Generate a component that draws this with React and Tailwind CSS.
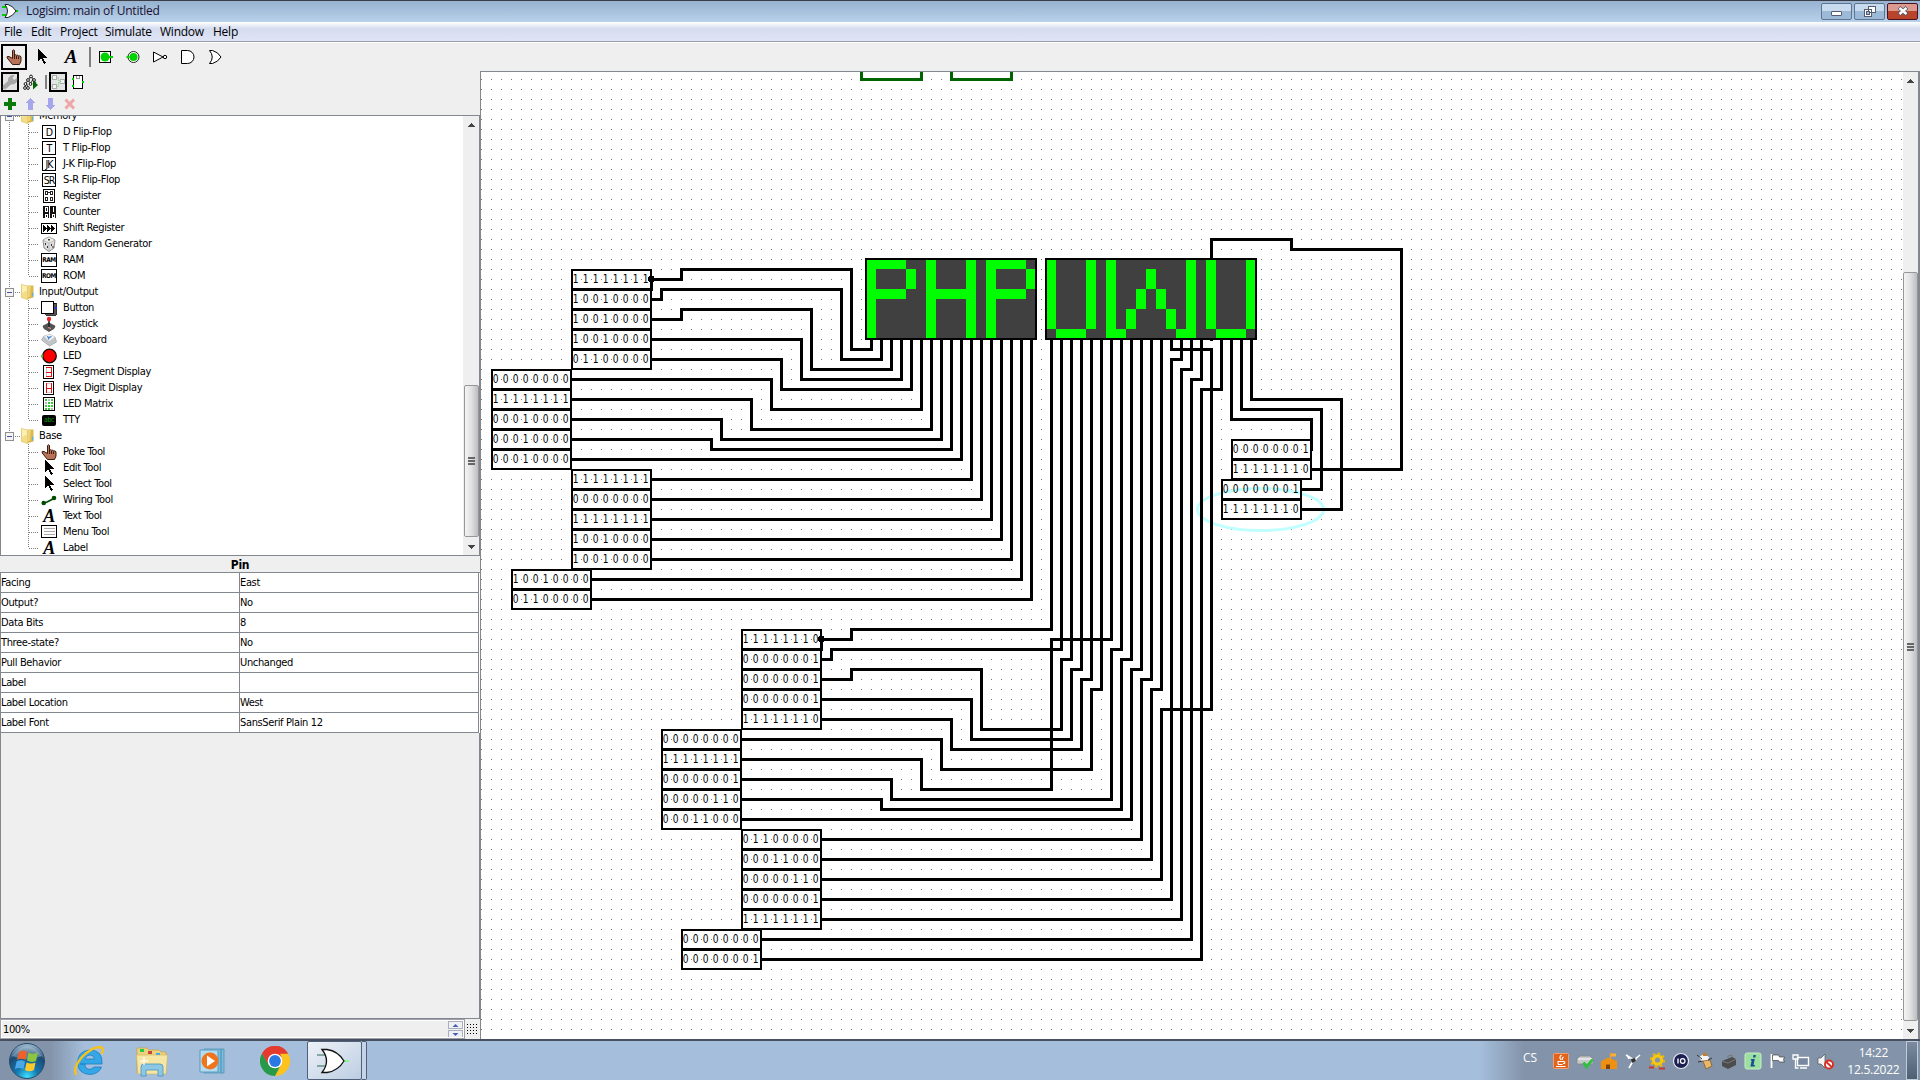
import React from "react";

const UI = "font-['DejaVu_Sans_Condensed','DejaVu_Sans',sans-serif] [font-stretch:condensed] text-[11px] tracking-[-0.36px]";
const SEGOE = "font-['Open_Sans','Noto_Sans',sans-serif]";

/* ---------- circuit data ---------- */
const PHP = [
  "11111111", "10010000", "10010000", "10010000", "01100000",
  "00000000", "11111111", "00010000", "00010000", "00010000",
  "11111111", "00000000", "11111111", "10010000", "10010000",
  "10010000", "01100000",
];
const UWU = [
  "11111110", "00000001", "00000001", "00000001", "11111110",
  "00000000", "11111111", "00000001", "00000110", "00011000",
  "01100000", "00011000", "00000110", "00000001", "11111111",
  "00000000", "11111110", "00000001", "00000001", "00000001", "11111110",
];

const stack = (x, y, values) => values.map((bits, i) => ({ x, y: y + i * 20, bits }));
const PINS = [
  ...stack(571, 279, PHP.slice(0, 5)),
  ...stack(491, 379, PHP.slice(5, 10)),
  ...stack(571, 479, PHP.slice(10, 15)),
  ...stack(511, 579, PHP.slice(15, 17)),
  ...stack(741, 639, UWU.slice(0, 5)),
  ...stack(661, 739, ["00000000", "11111111", "00000001", "00000110", "00011000"]),
  ...stack(741, 839, ["01100000", "00011000", "00000110", "00000001", "11111111"]),
  ...stack(681, 939, ["00000000", "00000001"]),
  ...stack(1231, 449, ["00000001", "11111110"]),
  ...stack(1221, 489, ["00000001", "11111110"]),
];

const WIRES = [
  "M651 279H681V269H851V349H871V339",
  "M651 279V289",
  "M651 299H661V289H841V359H881V339",
  "M651 319H681V309H811V369H891V339",
  "M651 339H801V379H901V339",
  "M651 359H781V389H911V339",
  "M571 379H771V409H921V339",
  "M571 399H751V429H931V339",
  "M571 419H721V439H941V339",
  "M571 439H711V449H951V339",
  "M571 459H961V339",
  "M651 479H971V339",
  "M651 499H981V339",
  "M651 519H991V339",
  "M651 539H1001V339",
  "M651 559H1011V339",
  "M591 579H1021V339",
  "M591 599H1031V339",
  "M821 639H851V629H1051V339",
  "M821 639V649",
  "M821 659H831V649H1061V339",
  "M821 679H851V669H981V729H1061V659H1071V339",
  "M821 699H971V739H1071V669H1081V339",
  "M821 719H951V749H1081V679H1091V339",
  "M741 739H941V769H1091V689H1101V339",
  "M741 759H921V789H1051V639H1111V339",
  "M741 779H891V799H1111V649H1121V339",
  "M741 799H881V809H1121V659H1131V339",
  "M741 819H1131V669H1141V339",
  "M821 839H1141V679H1151V339",
  "M821 859H1151V689H1161V339",
  "M821 879H1161V709H1211V349H1171V339",
  "M821 899H1171V359H1181V339",
  "M821 919H1181V369H1191V339",
  "M761 939H1191V379H1201V339",
  "M761 959H1201V389H1221V339",
  "M1211 339V239H1291V249H1401V469H1311",
  "M1231 339V419H1311V449",
  "M1241 339V409H1321V489H1301",
  "M1251 339V399H1341V509H1301",
];

function Matrix({ x, y, cols }) {
  const w = cols.length * 10;
  return (
    <g>
      <rect x={x} y={y} width={w} height="80" fill="#404040" />
      {cols.map((c, i) =>
        c.split("").map((b, j) =>
          b === "1" ? <rect key={i + "-" + j} x={x + i * 10} y={y + j * 10} width="10" height="10" fill="#00ff00" /> : null
        )
      )}
      <rect x={x} y={y} width={w} height="80" fill="none" stroke="#000" strokeWidth="2" />
    </g>
  );
}

function Circuit() {
  return (
    <svg width="1422" height="967" viewBox="481 72 1422 967" className="block shrink-0 bg-white" shapeRendering="crispEdges">
      <defs>
        <pattern id="grid" width="10" height="10" patternUnits="userSpaceOnUse">
          <rect x="1" y="9" width="1" height="1" fill="#777" />
        </pattern>
      </defs>
      <rect x="481" y="72" width="1422" height="967" fill="url(#grid)" />
      <g fill="#fff" stroke="#006400" strokeWidth="3">
        <rect x="861.5" y="60" width="60" height="19.5" />
        <rect x="951.5" y="60" width="60" height="19.5" />
      </g>
      <ellipse cx="1260.5" cy="509.5" rx="63" ry="21" fill="none" stroke="#c0ffff" strokeWidth="3" shapeRendering="auto" />
      <g fill="none" stroke="#000" strokeWidth="3" strokeLinecap="square" transform="translate(.5 .5)">
        {WIRES.map((d) => <path key={d} d={d} />)}
      </g>
      <path d="M649 276h4l1 1v4l-1 1h-4l-1-1v-4zM819 636h4l1 1v4l-1 1h-4l-1-1v-4z" />
      {PINS.map((p) => (
        <g key={p.x + "-" + p.y}>
          <rect x={p.x + 1} y={p.y - 9} width="79" height="19" fill="none" stroke="#000" strokeWidth="2" />
          {p.bits.split("").map((b, i) => (
            <text
              key={i}
              transform={`translate(${p.x + 4.6 + i * 10} ${p.y + 4}) scale(.88 1)`}
              textAnchor="middle"
              className="font-['DejaVu_Sans_Condensed','DejaVu_Sans',sans-serif] text-[11.5px] [font-stretch:condensed]"
            >{b}</text>
          ))}
        </g>
      ))}
      <Matrix x={866} y={259} cols={PHP} />
      <Matrix x={1046} y={259} cols={UWU} />
    </svg>
  );
}

/* ---------- icons ---------- */
const Ico = ({ w = 16, h = 16, smooth, children }) => (
  <svg width={w} height={h} viewBox={`0 0 ${w} ${h}`} className="block shrink-0 overflow-visible" fill="none" shapeRendering={smooth ? "auto" : "crispEdges"}>
    {children}
  </svg>
);

const Hand = () => (
  <Ico smooth>
    <path d="M6.500 9.500V1.500q1-1.500 2 0V6q1-.8 2 .3q1-.6 2 .5q1.500-.3 2.500 1v4.200L13.500 15.500H6.500L1.200 9V7.500H3z" fill="#b87358" stroke="#3a1c10" strokeWidth="1" />
    <path d="M8.500 6v4M10.500 7V10M12.500 7.500v2.500" stroke="#3a1c10" />
  </Ico>
);
const Arrow = () => <Ico><path d="M4 0v12l3-3 3 6 2-1-3-5h4.500z" fill="#000" /></Ico>;
const LetterA = ({ big }) => (
  <span className={"block w-4 text-center font-['Liberation_Serif',serif] font-bold italic leading-4 " + (big ? "translate-x-[1px] text-[19px]" : "text-[18px]")}>A</span>
);
const PinIn = () => <Ico><path d="M2.500 2.500h11v11h-11z" stroke="#000" fill="#fff" /><circle cx="8" cy="8" r="4.500" fill="#00d200" shapeRendering="auto" /><path d="M12 7h4v2h-4z" fill="#00d200" /></Ico>;
const PinOut = () => <Ico smooth><circle cx="8.500" cy="8" r="5.500" stroke="#222" fill="#fff" /><circle cx="8.500" cy="8" r="4" fill="#00d200" /><path d="M1.500 7h3v2h-3z" fill="#00d200" /></Ico>;
const NotGate = () => <Ico smooth><path d="M1.500 3v10L11 8z" stroke="#000" fill="#fff" /><circle cx="13" cy="8" r="1.700" stroke="#000" fill="#fff" /></Ico>;
const AndGate = () => <Ico smooth><path d="M1.500 1.500h6a6.500 6.500 0 0 1 0 13h-6z" stroke="#000" fill="#fff" /></Ico>;
const OrGate = () => <Ico smooth><path d="M2.500 1.500h3Q11 3 14 8Q11 13 5.500 14.500h-3Q8 8 2.500 1.500z" stroke="#000" fill="#fff" /></Ico>;
const Wrench = () => <Ico smooth><path d="M1.500 14.500l-.5-2.500L6.500 7Q6 2.500 10 1.500h2L10 4l2 2.500 3-2Q15.500 9 11 10H9L3.500 14.800z" fill="#a8a8a8" stroke="#999" strokeWidth=".6" /></Ico>;
const SimTree = () => (
  <Ico smooth>
    <path d="M8 2L3 9M8 2l5 7M5 6l3 4M3 9l-1 4M3 9l2 4M10 5l-2 4" stroke="#000" strokeWidth=".8" />
    {[[8, 2.500], [5, 6], [11, 6], [2.500, 10], [7.500, 10], [2, 14], [5, 14]].map(([x, y]) => <circle key={x + "," + y} cx={x} cy={y} r="1.400" fill="#fff" stroke="#000" strokeWidth=".9" />)}
    <path d="M10 6.500v9l5-4.500z" fill="#006400" />
  </Ico>
);
const Circ = () => <Ico><path d="M2.500 1.500h4v4h-4zM2.500 10.500h4v4h-4zM10.500 5.500h4v4h-4z" stroke="#aaa" fill="#f4f4f4" /><path d="M1 3.500h1M1 12.500h1M7 3.500h1.500v3h2M7 12.500h1.500v-4h2" stroke="#a6dba6" /></Ico>;
const Chip = () => <Ico><path d="M3.500 1.500h9v13h-9z" stroke="#000" fill="#fff" /><path d="M6.500 2v2h3v-2" stroke="#999" /><path d="M2 4h2v2H2zM2 11h2v2H2zM12 7h2v2h-2z" fill="#00d200" /></Ico>;
const Plus = () => <Ico><path d="M6 2h4v4h4v4h-4v4H6v-4H2V6h4z" fill="#0a780a" /></Ico>;
const Up = () => <Ico><path d="M8 2l5 5h-2.500v7h-5V7H3z" fill="#a6a6ec" /></Ico>;
const Down = () => <Ico><path d="M8 14l5-5h-2.500V2h-5v7H3z" fill="#a6a6ec" /></Ico>;
const Cross = () => <Ico smooth><path d="M3.500 3.500l8.500 9M12 3.500l-8.500 9" stroke="#eea6a6" strokeWidth="3" /></Ico>;

const Boxed = ({ t }) => (
  <span className="flex h-[14px] w-[14px] shrink-0 items-center justify-center border border-black bg-white font-['DejaVu_Sans_Condensed','DejaVu_Sans',sans-serif] text-[10.5px] leading-none tracking-[-1px]">{t}</span>
);
const Reg = () => <Ico><path d="M2.500 1.500h11v13h-11z" stroke="#000" fill="#fff" /><path d="M4.500 3.500h2v3h-2zM9.500 3.500h2v3h-2zM4.500 9.500h2v3h-2zM9.500 9.500h2v3h-2zM7 4h2" stroke="#222" /></Ico>;
const Cnt = () => <Ico><path d="M2 2h6v12H2zM9 2h6v12H9z" fill="#111" /><path d="M4 3.500h2v4H4zM12 3v5M4 10.500h2v3H4zM11 10.500h2v3h-2z" stroke="#fff" /></Ico>;
const Shift = () => <Ico><path d="M.5 3.500h15v10H.5z" stroke="#000" fill="#fff" /><path d="M2 5l4 3.500L2 12zM6 5l4 3.500L6 12zM10 5l4 3.500L10 12z" fill="#000" /></Ico>;
const Dice = () => <Ico smooth><path d="M8 1l6 3-1 8-5 3.500L3 12 2 4z" fill="#ddd" stroke="#777" strokeWidth=".8" /><path d="M2 4l6 3 6-3L8 1zM8 7v8.500" stroke="#aaa" strokeWidth=".7" fill="#f0f0ec" /><path d="M7 3h2v1.500H7zM4 7h1v2H4zM6 10h1v2H6zM10 8h1v2h-1zM11.500 10h1v2h-1z" fill="#333" /></Ico>;
const Mem = ({ t }) => (
  <span className="flex h-[14px] w-4 items-center justify-center border border-black bg-white font-['DejaVu_Sans_Condensed','DejaVu_Sans',sans-serif] text-[6.500px] font-bold leading-none tracking-[-0.5px]">{t}</span>
);
const Btn = () => <Ico><path d="M3 3h12v12H5l-2-2z" fill="#555" stroke="#000" strokeWidth=".8" /><path d="M.5 1.500h12v12H.5z" fill="#fff" stroke="#000" /><path d="M14 7h2v2h-2z" fill="#22f" /></Ico>;
const Joy = () => <Ico smooth><path d="M2 10l6-3 6 3-1 2.500L8 15.500 3 12.500z" fill="#555" stroke="#333" strokeWidth=".7" /><path d="M8 4v7" stroke="#222" strokeWidth="1.600" /><circle cx="8" cy="3" r="2.200" fill="#e22" /><path d="M7 11.500l3 1" stroke="#e99" /></Ico>;
const Key = () => <Ico smooth><path d="M.5 8L3 4l6-1.500L14 5l1.500 5-7 4z" fill="#c2c5c8" stroke="#9a9da0" strokeWidth=".7" /><path d="M3 4l6-1.500L14 5 8 9z" fill="#f1f4f7" /><path d="M6 4.500l2 1 2.500-1M8 5.500l-.5 2" stroke="#37c" strokeWidth="1.200" /></Ico>;
const Led = () => <Ico smooth><circle cx="8.500" cy="8" r="6.800" fill="#f00" stroke="#111" strokeWidth="1.300" /><path d="M0 7h2v2.500H0z" fill="#3c3" /></Ico>;
const Seg = ({ hex }) => <Ico><path d="M2.500 1.500h10v13h-10z" stroke="#000" fill="#fff" /><path d="M5.500 3.500v9h5v-9z" stroke="#ccc" /><path d={hex ? "M5.500 3v10M10.500 3v10M5 8.500h5" : "M5 3.500h5.500v9H5M5 8.500h5"} stroke="#e01010" /></Ico>;
const MatrixIcon = () => (
  <Ico>
    <path d="M2.500 1.500h11v13h-11z" stroke="#000" fill="#fff" />
    {[3, 6, 9, 12].map((y, j) => [4, 7, 10].map((x, i) => <rect key={x + "-" + y} x={x} y={y} width="2" height="2" fill={(i + j) % 4 === 1 ? "#bbb" : "#3c3"} />))}
  </Ico>
);
const Tty = () => <span className="flex h-[11px] w-[14px] items-center justify-center rounded-[2px] bg-black font-['DejaVu_Sans_Condensed','DejaVu_Sans',sans-serif] text-[7px] leading-none tracking-[-0.4px] text-[#0a9a0a]">abc</span>;
const WireIcon = () => <Ico smooth><path d="M2 11.500L6 10l3-1.500L14 6" stroke="#004d00" strokeWidth="1.800" /><circle cx="2.700" cy="11" r="2.300" fill="#004d00" /><circle cx="13" cy="6" r="2.300" fill="#004d00" /></Ico>;
const MenuIcon = () => <Ico><path d="M.5 1.500h15v12H.5z" fill="#fff" stroke="#000" /><path d="M2.500 4.500h11M2.500 7.500h11M2.500 10.500h11" stroke="#aaa" /></Ico>;
const Folder = () => (
  <svg width="14" height="16" viewBox="0 0 14 16" className="block shrink-0">
    <path d="M7 1.500h5.500v12L7 15z" fill="#dcb84c" /><path d="M.5.500L6.500 2v13.500L.5 13.500z" fill="#f3dd86" stroke="#d9b94f" strokeWidth=".6" /><path d="M1 1l5 1.500v4L1 9z" fill="#faf0b4" /><path d="M7 2h3l-1 11H7z" fill="#eed478" /><path d="M11 8.500h1.300v4H11z" fill="#5ab4e8" />
  </svg>
);

/* ---------- explorer tree ---------- */
const TREE = [
  ["Memory", null],
  ["D Flip-Flop", <Boxed t="D" />], ["T Flip-Flop", <Boxed t="T" />], ["J-K Flip-Flop", <Boxed t="JK" />], ["S-R Flip-Flop", <Boxed t="SR" />],
  ["Register", <Reg />], ["Counter", <Cnt />], ["Shift Register", <Shift />], ["Random Generator", <Dice />],
  ["RAM", <Mem t="RAM" />], ["ROM", <Mem t="ROM" />],
  ["Input/Output", null],
  ["Button", <Btn />], ["Joystick", <Joy />], ["Keyboard", <Key />], ["LED", <Led />],
  ["7-Segment Display", <Seg />], ["Hex Digit Display", <Seg hex />], ["LED Matrix", <MatrixIcon />], ["TTY", <Tty />],
  ["Base", null],
  ["Poke Tool", <Hand />], ["Edit Tool", <Arrow />], ["Select Tool", <Arrow />], ["Wiring Tool", <WireIcon />],
  ["Text Tool", <LetterA />], ["Menu Tool", <MenuIcon />], ["Label", <LetterA />],
];

function Lines({ group, last, trunk }) {
  const c = { stroke: "#808080", strokeDasharray: "1 1" };
  return group ? (
    <svg width="20" height="16" className="block shrink-0" shapeRendering="crispEdges">
      <path d={trunk ? "M8.500 0V16" : "M8.500 0V8"} {...c} />
      <path d="M14 8.500H20" {...c} />
      <rect x="4.500" y="4.500" width="8" height="8" rx="1" fill="#f4f4f4" stroke="#8f8f8f" />
      <path d="M6 8.500h5" stroke="#3a58a8" />
    </svg>
  ) : (
    <svg width="40" height="16" className="block shrink-0" shapeRendering="crispEdges">
      {trunk && <path d="M8.500 0V16" {...c} />}
      <path d={last ? "M27.500 0V8" : "M27.500 0V16"} {...c} />
      <path d="M28 8.500H38" {...c} />
    </svg>
  );
}

function Tree() {
  return (
    <div className={"-mt-[8px] flex flex-col " + UI}>
      {TREE.map(([label, icon], i) => {
        const group = !icon;
        const last = !TREE[i + 1] || !TREE[i + 1][1];
        return (
          <div key={label} className="flex h-4 shrink-0 items-center whitespace-nowrap leading-4">
            <Lines group={group} last={last} trunk={i < 20} />
            {group ? <Folder /> : <span className="flex w-4 shrink-0 items-center justify-center">{icon}</span>}
            <span className={group ? "ml-[4px]" : "ml-[6px]"}>{label}</span>
          </div>
        );
      })}
    </div>
  );
}

const Tri = ({ up }) => (
  <svg width="15" height="17" className="block shrink-0" shapeRendering="crispEdges">
    <path d={up ? "M4 11h7L7.500 7z" : "M4 8h7L7.500 12z"} fill="#444" />
  </svg>
);
const Thumb = ({ size }) => (
  <div className={"flex shrink-0 items-center justify-center rounded-[2px] border border-[#979797] bg-gradient-to-r from-[#f4f4f4] via-[#e0e0e2] to-[#bdbdc1] " + size}>
    <div className="flex flex-col gap-[1px]">
      <div className="h-[2px] w-[7px] bg-[#666]" /><div className="h-[2px] w-[7px] bg-[#666]" /><div className="h-[2px] w-[7px] bg-[#666]" />
    </div>
  </div>
);

const ATTRS = [
  ["Facing", "East"], ["Output?", "No"], ["Data Bits", "8"], ["Three-state?", "No"],
  ["Pull Behavior", "Unchanged"], ["Label", ""], ["Label Location", "West"], ["Label Font", "SansSerif Plain 12"],
];

function LeftPanel() {
  return (
    <div className="flex w-[480px] shrink-0 flex-col bg-[#efefef]">
      <div className="flex h-[22px] shrink-0 items-center pl-[1px]">
        <div className="flex h-[20px] w-[18px] items-center justify-center border-2 border-black bg-[#e4e4e4]"><Wrench /></div>
        <div className="ml-[4px]"><SimTree /></div>
        <div className="ml-[6px] h-[14px] w-[2px] bg-[#808080]" />
        <div className="ml-[2px] flex h-[20px] w-[18px] items-center justify-center border-2 border-black bg-[#e4e4e4]"><Circ /></div>
        <div className="ml-[3px]"><Chip /></div>
      </div>
      <div className="flex h-[22px] shrink-0 items-center gap-1 pl-[2px]"><Plus /><Up /><Down /><Cross /></div>
      <div className="flex h-[441px] shrink-0 overflow-hidden border border-[#828790] bg-white">
        <div className="min-w-0 flex-1 overflow-hidden"><Tree /></div>
        <div className="flex w-[16px] flex-col items-center bg-[#efefef]">
          <Tri up /><div className="h-[252px] shrink-0" /><Thumb size="h-[152px] w-[15px]" /><Tri />
        </div>
      </div>
      <div className="flex h-[16px] shrink-0 items-center justify-center pt-[2px] font-['DejaVu_Sans_Condensed','DejaVu_Sans',sans-serif] text-[12px] font-bold leading-none tracking-[-0.3px]">Pin</div>
      <div className={"grid shrink-0 grid-cols-[239px_239px] border-l border-t border-[#828790] bg-white " + UI}>
        {ATTRS.map(([k, v]) => (
          <React.Fragment key={k}>
            <div className="h-[20px] border-b border-r border-[#828790] leading-[19px]">{k}</div>
            <div className="h-[20px] border-b border-r border-[#828790] leading-[19px]">{v}</div>
          </React.Fragment>
        ))}
      </div>
      <div className="flex-1 border-b border-l border-r border-[#828790]" />
      <div className="flex h-[20px] shrink-0">
        <div className="flex w-[465px] items-center border border-[#a0a0a8] bg-[#efefef] outline outline-1 -outline-offset-2 outline-white">
          <span className={"ml-[2px] flex-1 pt-[2px] " + UI}>100%</span>
          <span className="mr-[1px] flex flex-col gap-[1px]">
            <svg width="15" height="8" className="block border border-[#a8b0c0] bg-[#f0f0f4]"><path d="M3.500 5h6l-3-3z" fill="#4460b0" /></svg>
            <svg width="15" height="8" className="block border border-[#a8b0c0] bg-[#f0f0f4]"><path d="M3.500 2h6l-3 3z" fill="#4460b0" /></svg>
          </span>
        </div>
        <svg width="14" height="19" className="block" shapeRendering="crispEdges">
          {[0, 1, 2, 3].map((r) => [0, 1, 2, 3].map((c) => <rect key={r + "-" + c} x={2 + c * 3} y={5 + r * 3} width="1" height="1" fill="#000" />))}
        </svg>
      </div>
    </div>
  );
}

/* ---------- window frame ---------- */
const ToolSlot = ({ on, children }) => (
  <div className={"flex h-[26px] w-[26px] shrink-0 items-center justify-center " + (on ? "border-2 border-black" : "")}>{children}</div>
);

const MENU = [["File", "w-[27px]"], ["Edit", "w-[29px]"], ["Project", "w-[45px]"], ["Simulate", "w-[55px]"], ["Window", "w-[53px]"], ["Help", "w-[40px]"]];

function Header() {
  return (
    <div className="shrink-0">
      <div className="flex h-[22px] items-center border-t border-[#3c3c44] bg-gradient-to-b from-[#97b3d1] to-[#b9d1ea]">
        <svg width="16" height="16" viewBox="0 0 16 16" className="mb-[2px] ml-[2px] block">
          <path d="M0 4h5M0 12h5" stroke="#0c0" strokeWidth="2" /><path d="M13 8h3" stroke="#0c0" strokeWidth="2" />
          <path d="M3 1.500h3Q11 3 14 8Q11 13 6 14.500H3Q8 8 3 1.500z" fill="#fff" stroke="#222" />
        </svg>
        <span className={"mb-[2px] ml-[8px] flex-1 text-[12px] tracking-[-0.24px] text-[#1a1030] " + SEGOE}>Logisim: main of Untitled</span>
        <div className="mb-[1px] mr-[2px] flex gap-[2px]">
          <div className="flex h-[17px] w-[31px] items-center justify-center rounded-[2px] border border-[#5d7590] bg-gradient-to-b from-[#c8dbee] from-50% to-[#9db9d8] to-50%">
            <div className="mt-[4px] h-[5px] w-[11px] rounded-[1px] border border-[#555c70] bg-white" />
          </div>
          <div className="flex h-[17px] w-[31px] items-center justify-center rounded-[2px] border border-[#5d7590] bg-gradient-to-b from-[#c8dbee] from-50% to-[#9db9d8] to-50%">
            <svg width="12" height="11" shapeRendering="crispEdges"><path d="M4.500.5h7v6h-7zM.5 3.500h7v7h-7z" fill="#fff" stroke="#555c70" /><path d="M2.500 5.500h3v3h-3z" fill="#9db9d8" stroke="#555c70" /></svg>
          </div>
          <div className="flex h-[17px] w-[31px] items-center justify-center rounded-[2px] border border-[#4a1020] bg-gradient-to-b from-[#dc9a8e] from-50% to-[#b8442c] to-50%">
            <svg width="12" height="10"><path d="M2 1.500l8 7M10 1.500l-8 7" stroke="#555c70" strokeWidth="4" /><path d="M2.500 2l7 6M9.500 2l-7 6" stroke="#fff" strokeWidth="2.400" /></svg>
          </div>
        </div>
      </div>
      <div className={"flex h-[20px] items-center border-b border-[#9a9ea8] bg-gradient-to-b from-[#ffffff] via-[#d5dcef] via-35% to-[#dfe5f5] pl-[4px] text-[12px] tracking-[-0.24px] text-black " + SEGOE}>
        {MENU.map(([m, w]) => <span key={m} className={"shrink-0 whitespace-nowrap " + w}>{m}</span>)}
      </div>
      <div className="flex h-[29px] items-center gap-[2px] border-t border-white bg-[#efefef] pl-[1px]">
        <ToolSlot on><Hand /></ToolSlot>
        <ToolSlot><Arrow /></ToolSlot>
        <ToolSlot><LetterA big /></ToolSlot>
        <div className="ml-[4px] h-[20px] w-[2px] bg-[#808080]" />
        <div className="-ml-[1px] flex gap-[1.6px]">
          <ToolSlot><PinIn /></ToolSlot>
          <ToolSlot><PinOut /></ToolSlot>
          <ToolSlot><NotGate /></ToolSlot>
          <ToolSlot><AndGate /></ToolSlot>
          <ToolSlot><OrGate /></ToolSlot>
        </div>
      </div>
    </div>
  );
}

/* ---------- taskbar ---------- */
function Orb() {
  return (
    <svg width="38" height="38" viewBox="0 0 38 38">
      <defs>
        <radialGradient id="orb" cx=".5" cy=".95" r=".9"><stop offset="0" stopColor="#3fe0ff" /><stop offset=".35" stopColor="#1378b0" /><stop offset=".75" stopColor="#1c4a72" /><stop offset="1" stopColor="#8fb0c8" /></radialGradient>
      </defs>
      <circle cx="19" cy="19" r="17.500" fill="url(#orb)" stroke="#2a4a68" />
      <path d="M4 14Q19 -6 34 14Q19 20 4 14z" fill="#fff" opacity=".28" />
      <path d="M11 10Q15 7 19 10L17.500 18Q13 15.500 9 18z" fill="#f0602a" />
      <path d="M20.500 10.500Q25 13 30 10.500L28 19Q23 21 19 18.500z" fill="#8cc63f" />
      <path d="M8.500 19.500Q13 17 17 19.500L15.500 27Q11 25 7 27z" fill="#4aa8e8" />
      <path d="M18.500 20.500Q23 22.500 27.500 20.500L26 28Q21 30.500 17 28z" fill="#fcc82c" />
    </svg>
  );
}
const IE = () => (
  <svg width="32" height="32" viewBox="0 0 32 32">
    <path d="M7 19h22q1-14-12.500-14Q5 6 4.500 17.500Q5 29 17 29.500Q26 29 28.500 22H21q-4 4-8 1-1-1.500-1-4zM12 14q1-4 5-4t4.500 4z" fill="#35a7e6" stroke="#1c7dc4" strokeWidth=".8" fillRule="evenodd" />
    <path d="M3.500 30Q-1 24 9 12Q19 2 27 2Q32 3 28.500 9" fill="none" stroke="#f6c21c" strokeWidth="2.400" />
  </svg>
);
const Explorer = () => (
  <svg width="34" height="32" viewBox="0 0 34 32">
    <path d="M2 4q0-1 1-1h9l2 2h10l2 2h4q1 0 1 1v20H2z" fill="#ecd27c" stroke="#c4a248" strokeWidth=".7" />
    <path d="M5 4h4v3H5z" fill="#2c4" /><path d="M13 6h4v3h-4z" fill="#c43" /><path d="M21 8h4v2h-4z" fill="#3af" />
    <path d="M1.500 10h31L31 29H3z" fill="#f6e6a4" stroke="#d0b45c" strokeWidth=".6" />
    <path d="M6 31V22q0-3 3-3h16q3 0 3 3v9h-5v-6H11v6z" fill="#8cc8e6" stroke="#4a92b8" strokeWidth=".8" />
    <path d="M9 12v8M5 16h8" stroke="#fff" strokeWidth="1.200" />
  </svg>
);
const Media = () => (
  <svg width="32" height="30" viewBox="0 0 32 30">
    <path d="M6 3h20v24H6z" fill="#7cbcdc" stroke="#4a8cb0" strokeWidth=".7" /><path d="M23 3v24" stroke="#4a8cb0" /><path d="M2 4h18v22H2z" fill="#b4dcf0" stroke="#5a9cc0" />
    <circle cx="12" cy="15" r="8.500" fill="#f0741c" /><path d="M9 9.500v11l8-5.500z" fill="#fff" />
  </svg>
);
const Chrome = () => (
  <svg width="30" height="30" viewBox="0 0 30 30">
    <path d="M15 15L2 7.500A15 15 0 0 1 28 7.500z" fill="#e33b2e" /><path d="M28 7.500A15 15 0 0 1 15 30L21.500 11 20 7.500z" fill="#fcc31e" /><path d="M2 7.500A15 15 0 0 0 15 30L21 18.500 9 18.500z" fill="#269a48" />
    <path d="M15 7.500h13A15 15 0 0 0 2 7.500L8.500 18.500z" fill="#e33b2e" />
    <circle cx="15" cy="15" r="7.300" fill="#fff" /><circle cx="15" cy="15" r="5.900" fill="#2a78e4" />
  </svg>
);

const T = ({ children }) => <svg width="18" height="18" viewBox="0 0 18 18" className="block shrink-0" fill="none">{children}</svg>;
function Tray() {
  return (
    <div className="flex items-center gap-[6px]">
      <T><rect x="1.500" y="1.500" width="15" height="15" rx="1" fill="#e2631c" stroke="#f4a070" /><path d="M9.500 3q-3 2-.5 5M11.500 5q-2 1-1 3M5.500 9.500h6q2 0 1 2h-1.500M6 10v1.500q0 1 1 1h3.500M4 14.500h9.500" stroke="#fff" strokeWidth="1.100" /></T>
      <T><path d="M1 7l3-3h10l3 3v5H1z" fill="#c4c8c8" stroke="#888" strokeWidth=".8" /><path d="M2 7h14" stroke="#fff" /><path d="M7.500 10.500l3 4.500 6-7.500" stroke="#2cc03c" strokeWidth="2.800" /></T>
      <T><path d="M1 9.500L8 5.500l9 3.500v8H1z" fill="#ef9010" /><path d="M6 17v-4.500h4V17z" fill="#7a4408" /><path d="M10.500 1v7" stroke="#f0a020" strokeWidth="1.200" /><path d="M11 1.500h5v3h-5z" fill="#ffb030" /></T>
      <T><path d="M2 3l8 5M10 8l6-5M9 9l-4 7M3 3l2 4M13 5l-2 4" stroke="#fff" strokeWidth="1.600" /><path d="M7 7l4-1 1 3-4 2z" fill="#333" /></T>
      <T><circle cx="9.500" cy="8" r="4.200" stroke="#f8c810" strokeWidth="3.200" /><circle cx="9.500" cy="8" r="6.600" stroke="#f0b800" strokeWidth="2" strokeDasharray="2.600 2.580" /><path d="M1 15.500h5M11 16.500h6" stroke="#c33" strokeWidth="2" /></T>
      <T><circle cx="9" cy="9" r="7.500" fill="#1c2050" stroke="#e8e8f4" strokeWidth="1.200" /><path d="M6 6.500v5" stroke="#fff" strokeWidth="1.400" /><circle cx="10.700" cy="9" r="2.300" stroke="#fff" strokeWidth="1.200" /></T>
      <T><path d="M3 5l5-3 5 3-1 5H6z" fill="#f4f4f4" /><path d="M7 1h4v3H7z" fill="#c08030" /><path d="M7 9l7-1 2 6-6 3z" fill="#e8b868" stroke="#7c5020" strokeWidth=".7" /><path d="M1 3l5 4M2 10l5-1M16 6l-4 2" stroke="#333" /></T>
      <T><path d="M2 9l10-4 4 2v6l-8 4-6-3z" fill="#4c4c4c" /><path d="M2 9l6 2 8-4M8 6V4l4-1v2" stroke="#777" /></T>
      <T><rect x="1" y="1" width="16" height="16" rx="2" fill="#9be0a0" stroke="#c4f0c4" /><path d="M9.500 3h2.400l-.5 2.400H9zM7 7h3.800l-1.300 6h1.500l-.3 1.500H6.400L7.700 8.500H6.700z" fill="#185090" /></T>
      <T><path d="M3.500 2v14" stroke="#fff" strokeWidth="1.800" /><path d="M4.500 3h6l1 2h5q-2 3 0 5h-5l-1-1.500h-6z" fill="#fff" stroke="#444" strokeWidth=".7" /></T>
      <T><rect x="5.500" y="5.500" width="11" height="8" fill="#7888a0" stroke="#fff" strokeWidth="1.400" /><path d="M8 16h7M1 3h5v4H1zM3.500 7v9h3" stroke="#fff" strokeWidth="1.300" /></T>
      <T><path d="M2 6h3l4-4v14l-4-4H2z" fill="#f4f4f4" stroke="#555" strokeWidth=".7" /><circle cx="13" cy="12.500" r="4" fill="#fff" stroke="#d82c20" strokeWidth="1.800" /><path d="M10.300 10l5.500 5" stroke="#d82c20" strokeWidth="1.800" /></T>
    </div>
  );
}

function Taskbar() {
  return (
    <div className="flex h-[41px] shrink-0 items-center border-t-2 border-[#46505e] bg-[#a5bedb]">
      <div className="flex h-full w-[84px] shrink-0 items-center bg-gradient-to-r from-[#8394aa] from-60% to-[#a5bedb] pl-[8px]"><Orb /></div>
      <div className="-ml-[11px] flex w-[62px] shrink-0"><IE /></div>
      <div className="flex w-[62px] shrink-0"><Explorer /></div>
      <div className="ml-[1px] flex w-[62px] shrink-0"><Media /></div>
      <div className="flex w-[47px] shrink-0"><Chrome /></div>
      <div className="flex h-[39px] w-[55px] shrink-0 items-center justify-center rounded-[2px] border border-[#50607a] bg-gradient-to-br from-[#eef2f8] to-[#bccde2]">
        <svg width="34" height="26" viewBox="0 0 34 26" className="-ml-[4px]"><path d="M1 7h9M1 18h9" stroke="#2a6a4a" strokeWidth="1" /><path d="M27 13h6" stroke="#8cf48c" strokeWidth="2" /><path d="M6 1.500h5Q22 3 28 13Q22 23 11 24.500H6Q15 13 6 1.500z" fill="#fff" stroke="#111" strokeWidth="1.300" /></svg>
      </div>
      <div className="h-[39px] w-[5px] shrink-0 rounded-r-[2px] border border-l-0 border-[#50607a] bg-[#c4d3e6]" />
      <div className="flex-1" />
      <div className={"flex h-full w-[440px] shrink-0 items-center bg-gradient-to-r from-[#a5bedb] to-[#8394aa] to-10% text-[12px] text-white " + SEGOE}>
        <span className="ml-[43px] w-[31px] -translate-y-[3px] tracking-[-0.1px]">CS</span>
        <Tray />
        <div className="ml-[7px] flex w-[69px] flex-col items-center leading-[17px] tracking-[-0.25px]"><span>14:22</span><span>12.5.2022</span></div>
        <div className="ml-auto mr-[2px] h-full w-[13px] border border-[#c0cbd8] bg-gradient-to-b from-[#7c8b9f] to-[#4f6074]" />
      </div>
    </div>
  );
}

export default function App() {
  return (
    <div className="flex h-[1080px] w-[1920px] flex-col overflow-hidden bg-[#efefef] text-black">
      <Header />
      <div className="flex min-h-0 flex-1">
        <LeftPanel />
        <div className="flex flex-1 overflow-hidden border border-r-2 border-b-0 border-[#828790] bg-white">
          <Circuit />
          <div className="flex flex-1 flex-col items-center bg-[#efefef]">
            <Tri up />
            <div className="h-[183px] shrink-0" />
            <Thumb size="h-[749px] w-[15px]" />
            <Tri />
          </div>
        </div>
      </div>
      <Taskbar />
    </div>
  );
}
